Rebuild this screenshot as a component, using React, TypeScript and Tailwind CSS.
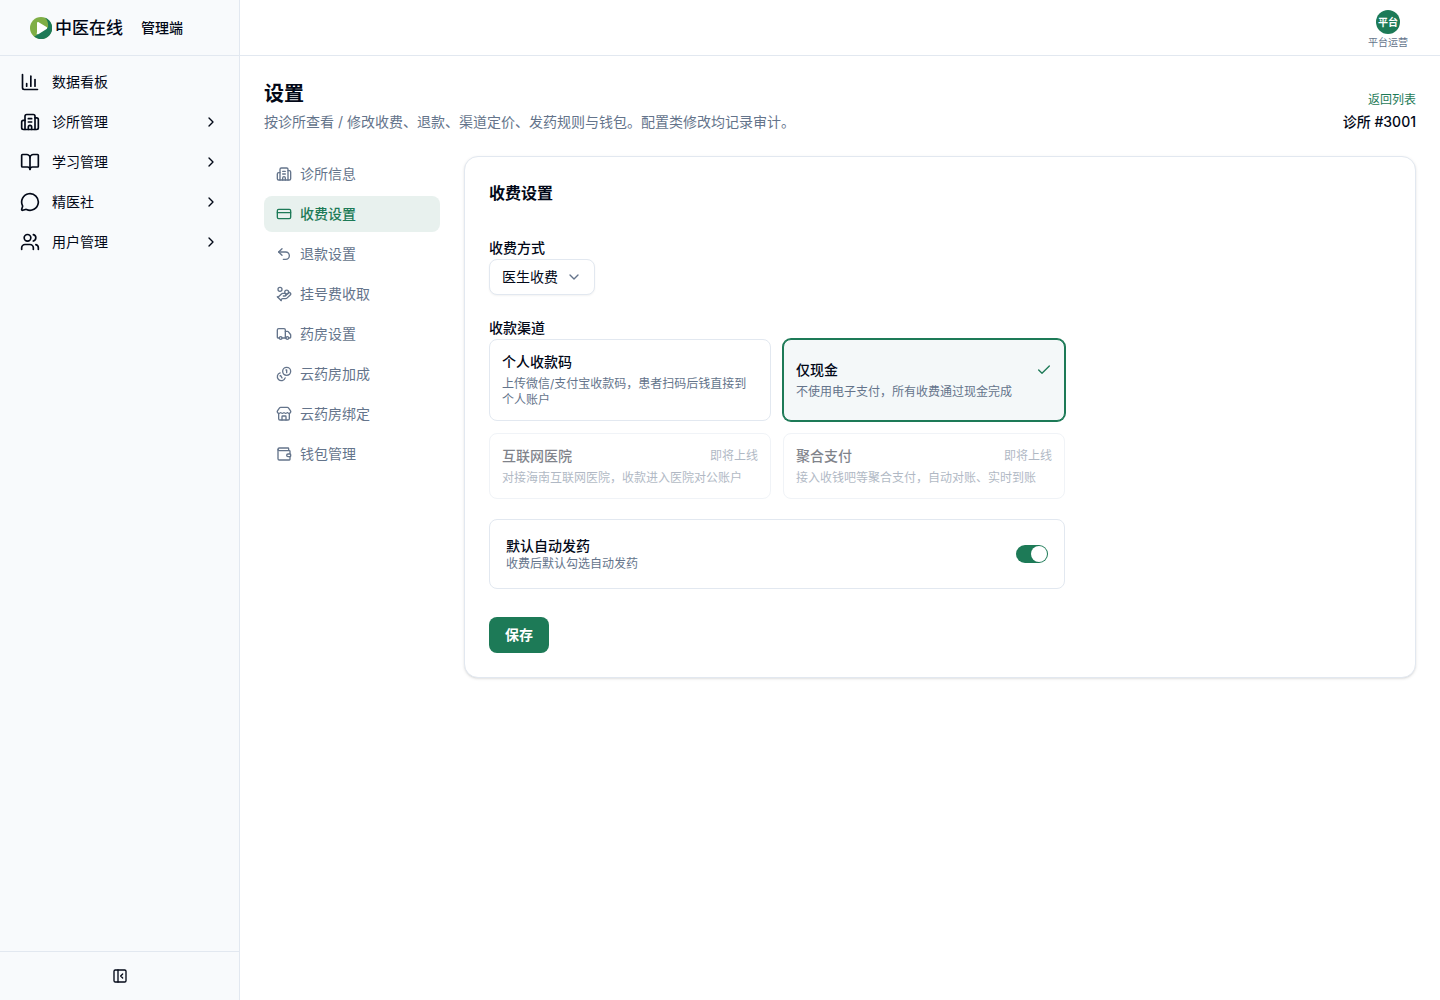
import { useState } from "react";
import {
  BookOpen,
  Building2,
  ChartColumn,
  Check,
  ChevronDown,
  ChevronRight,
  CreditCard,
  HandCoins,
  MessageCircle,
  PanelLeftClose,
  Store,
  Truck,
  Undo2,
  Users,
  Wallet,
} from "lucide-react";
import { clsx } from "clsx";

const Coins = ({ className }: { className?: string }) => (
  <svg
    viewBox="0 0 24 24"
    fill="none"
    stroke="currentColor"
    strokeWidth="2"
    strokeLinecap="round"
    strokeLinejoin="round"
    className={className}
    aria-hidden="true"
  >
    <path d="M13.744 17.736a6 6 0 1 1-7.48-7.48" />
    <path d="M15 6h1v4" />
    <path d="m6.134 14.768.866-.5 2 3.464" />
    <circle cx="16" cy="8" r="6" />
  </svg>
);

const mainNav = [
  { label: "数据看板", icon: ChartColumn, expandable: false },
  { label: "诊所管理", icon: Building2, expandable: true },
  { label: "学习管理", icon: BookOpen, expandable: true },
  { label: "精医社", icon: MessageCircle, expandable: true },
  { label: "用户管理", icon: Users, expandable: true },
];

const settingsNav = [
  { label: "诊所信息", icon: Building2 },
  { label: "收费设置", icon: CreditCard },
  { label: "退款设置", icon: Undo2 },
  { label: "挂号费收取", icon: HandCoins },
  { label: "药房设置", icon: Truck },
  { label: "云药房加成", icon: Coins },
  { label: "云药房绑定", icon: Store },
  { label: "钱包管理", icon: Wallet },
];

const channels = [
  {
    id: "personal",
    title: "个人收款码",
    desc: "上传微信/支付宝收款码，患者扫码后钱直接到个人账户",
    soon: false,
  },
  {
    id: "cash",
    title: "仅现金",
    desc: "不使用电子支付，所有收费通过现金完成",
    soon: false,
  },
  {
    id: "hospital",
    title: "互联网医院",
    desc: "对接海南互联网医院，收款进入医院对公账户",
    soon: true,
  },
  {
    id: "aggregate",
    title: "聚合支付",
    desc: "接入收钱吧等聚合支付，自动对账、实时到账",
    soon: true,
  },
];

const Logo = () => (
  <svg viewBox="0 0 22 22" className="size-[22px]" aria-hidden="true">
    <circle cx="11" cy="11" r="11" fill="#7fae45" />
    <path
      d="M15 .8A11 11 0 1 1 4.200 19.600C5.800 19 7 18 8 16.500L18 10.500C18.500 6.500 17.500 3 15 .8Z"
      fill="#1d7a57"
    />
    <path
      d="M7 6.300c0-1 .9-1.500 1.700-1L16.600 10c.8.500.8 1.500 0 2l-7.100 4.400c-.8.600-1.700.9-3 .9.400-.8.500-1.500.5-2.500Z"
      fill="#fff"
    />
  </svg>
);

const Sidebar = () => (
  <aside className="flex w-60 shrink-0 flex-col border-r border-[#e2e8f0] bg-[#f8fafc]">
    <div className="flex h-14 items-center border-b border-[#e2e8f0] pl-[30px]">
      <Logo />
      <span className="ml-[3px] text-[17px] leading-5 font-medium">中医在线</span>
      <span className="ml-[18px] text-sm font-medium">管理端</span>
    </div>
    <nav className="flex flex-1 flex-col gap-1 p-2">
      {mainNav.map(({ label, icon: Icon, expandable }) => (
        <a
          key={label}
          href="#"
          className="flex h-9 items-center gap-3 rounded-md px-3 text-sm"
        >
          <Icon className="size-5" />
          <span className="flex-1">{label}</span>
          {expandable && <ChevronRight className="size-4" />}
        </a>
      ))}
    </nav>
    <div className="flex h-[49px] items-center justify-center border-t border-[#e2e8f0]">
      <button type="button" aria-label="收起侧栏" className="p-2">
        <PanelLeftClose className="size-4" />
      </button>
    </div>
  </aside>
);

const SettingsNav = () => (
  <nav className="flex w-44 shrink-0 flex-col gap-1">
    {settingsNav.map(({ label, icon: Icon }) => {
      const active = label === "收费设置";
      return (
        <a
          key={label}
          href="#"
          className={clsx(
            "flex h-9 items-center gap-2 rounded-lg px-3 text-sm",
            active
              ? "bg-[#e8f1ee] font-medium text-[#1d7a57]"
              : "text-[#64748b]"
          )}
        >
          <Icon className="size-4" />
          {label}
        </a>
      );
    })}
  </nav>
);

const FeeSettings = () => {
  const [channel, setChannel] = useState("cash");
  const [autoDispense, setAutoDispense] = useState(true);

  return (
    <section className="min-w-0 flex-1 rounded-[14px] border border-[#e2e8f0] bg-white p-6 shadow-sm">
      <h2 className="text-base font-semibold">收费设置</h2>

      <div className="mt-[30px] flex max-w-xl flex-col gap-5">
        <div>
          <label
            htmlFor="fee-mode"
            className="block pt-[3px] pb-px text-sm font-medium"
          >
            收费方式
          </label>
          <div className="relative w-fit">
            <select
              id="fee-mode"
              className="h-9 appearance-none rounded-lg border border-[#e2e8f0] bg-white pr-9 pl-3 text-sm shadow-xs"
            >
              <option>医生收费</option>
            </select>
            <ChevronDown className="pointer-events-none absolute top-[10px] right-[13px] size-4 text-[#64748b]" />
          </div>
        </div>

        <div>
          <p className="pt-[3px] pb-px text-sm font-medium">收款渠道</p>
          <div className="grid grid-cols-2 gap-3">
            {channels.map(({ id, title, desc, soon }) => (
              <button
                key={id}
                type="button"
                disabled={soon}
                onClick={() => setChannel(id)}
                className={clsx(
                  "flex flex-col justify-center gap-1 rounded-lg border p-3 text-left",
                  channel === id
                    ? "border-[#1d7a57] bg-[#f4f8f9] ring-1 ring-[#1d7a57]"
                    : "border-[#e2e8f0]",
                  soon && "opacity-50"
                )}
              >
                <span className="flex w-full items-center justify-between">
                  <span className="text-sm font-medium">{title}</span>
                  {channel === id && <Check className="size-4 text-[#1d7a57]" />}
                  {soon && <span className="text-xs text-[#64748b]">即将上线</span>}
                </span>
                <span className="text-xs text-[#64748b]">{desc}</span>
              </button>
            ))}
          </div>
        </div>

        <div className="flex items-center justify-between rounded-lg border border-[#e2e8f0] p-4">
          <label htmlFor="auto-dispense">
            <span className="block text-sm font-medium">默认自动发药</span>
            <span className="block text-xs text-[#64748b]">
              收费后默认勾选自动发药
            </span>
          </label>
          <input
            id="auto-dispense"
            type="checkbox"
            role="switch"
            checked={autoDispense}
            onChange={(e) => setAutoDispense(e.target.checked)}
            className="flex h-[18px] w-8 appearance-none items-center rounded-full bg-[#cbd5e1] px-px before:size-4 before:rounded-full before:bg-white checked:justify-end checked:bg-[#1d7a57]"
          />
        </div>
      </div>

      <button
        type="button"
        className="mt-7 flex h-9 items-center rounded-lg bg-[#1d7a57] px-4 text-sm font-semibold text-white"
      >
        保存
      </button>
    </section>
  );
};

export default function App() {
  return (
    <div className="flex min-h-screen bg-white font-['Inter','Noto_Sans_CJK_SC',sans-serif] text-[#020817]">
      <Sidebar />
      <div className="flex min-w-0 flex-1 flex-col">
        <header className="flex h-14 items-end justify-end border-b border-[#e2e8f0] px-8 pb-[5px]">
          <button type="button" className="flex flex-col items-center">
            <span className="flex size-6 items-center justify-center rounded-full bg-[#1d7a57] text-[10px] font-semibold text-white">
              平台
            </span>
            <span className="text-[10px] leading-4 text-[#64748b]">平台运营</span>
          </button>
        </header>

        <main className="p-6">
          <div className="flex items-end justify-between">
            <div>
              <h1 className="text-xl font-semibold">设置</h1>
              <p className="mt-1 text-sm text-[#64748b]">
                按诊所查看 / 修改收费、退款、渠道定价、发药规则与钱包。配置类修改均记录审计。
              </p>
            </div>
            <div className="flex flex-col items-end gap-1">
              <a href="#" className="text-xs text-[#1d7a57]">
                返回列表
              </a>
              <span className="text-sm font-medium">诊所 #3001</span>
            </div>
          </div>

          <div className="mt-6 flex items-start gap-6">
            <SettingsNav />
            <FeeSettings />
          </div>
        </main>
      </div>
    </div>
  );
}
